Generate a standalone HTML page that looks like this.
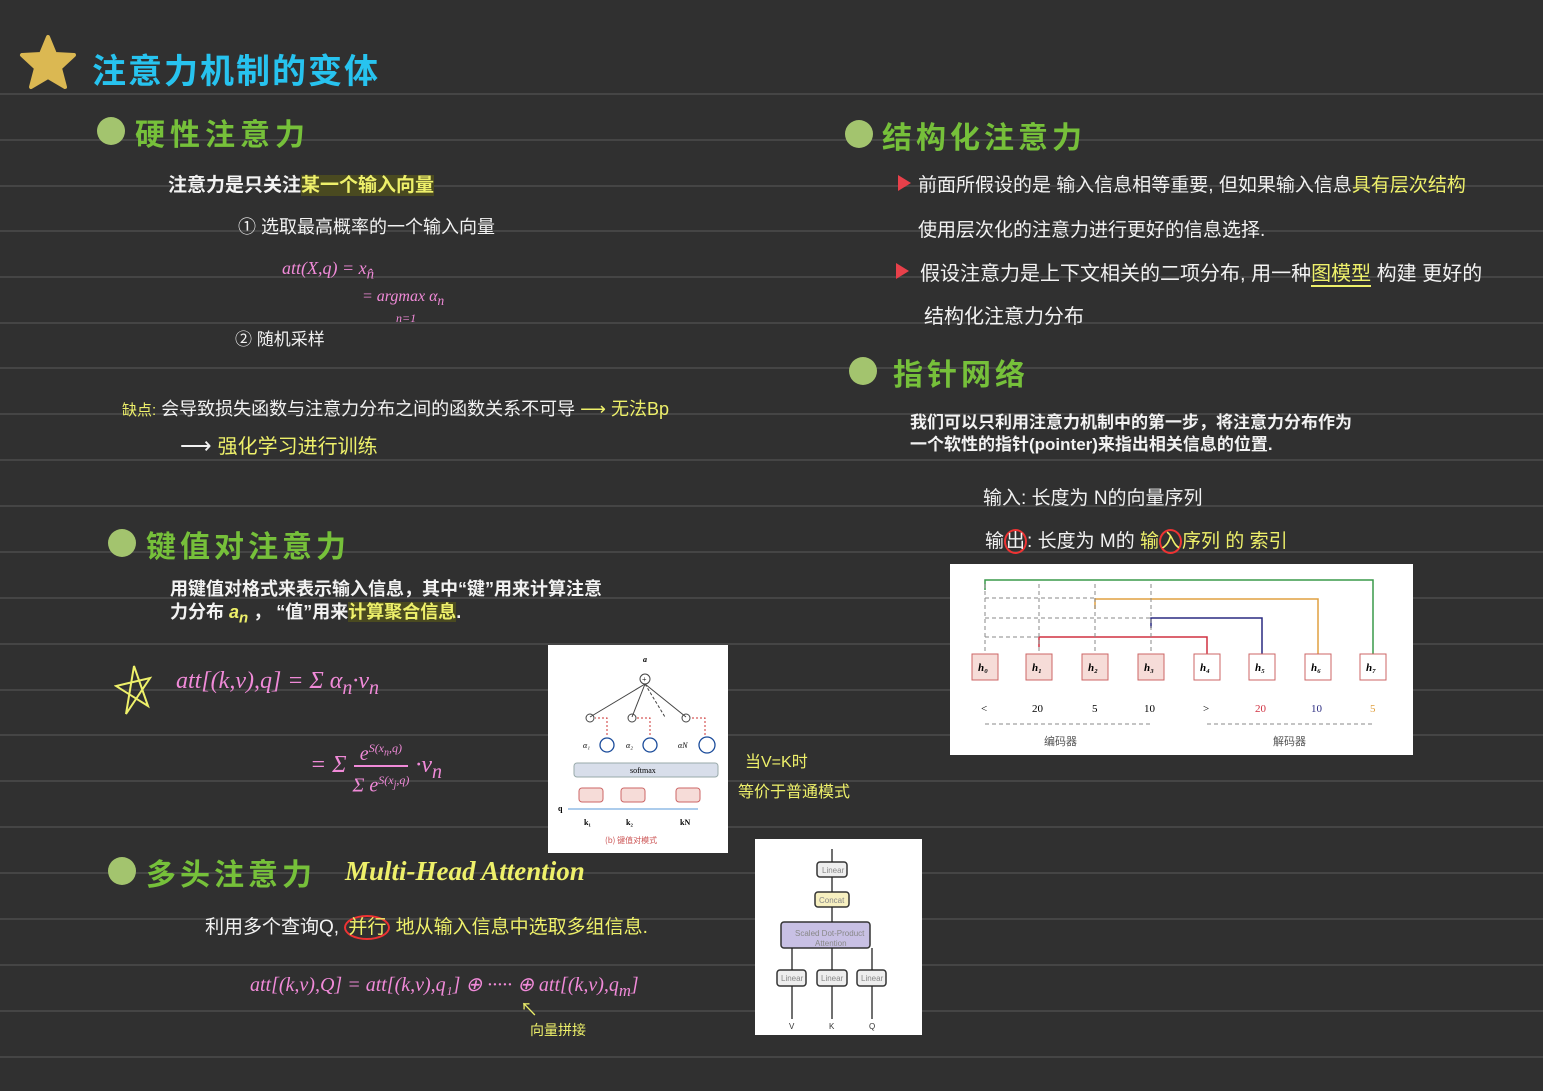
<!DOCTYPE html>
<html><head><meta charset="utf-8"><style>
body{margin:0;width:1543px;height:1091px;overflow:hidden;background:#303030;position:relative;font-family:"Liberation Sans","Noto Sans CJK SC",sans-serif;}
.l{position:absolute;left:0;width:1543px;height:2px;background:#454545;}
.t{position:absolute;white-space:nowrap;}
.h{color:#76c03a;font-weight:bold;font-size:30px;}
.dot{position:absolute;width:28px;height:28px;border-radius:50%;background:#a3c46e;}
.w{color:#f2f2f2;font-size:19px;}
.y{color:#eef06a;}
.p{color:#f08ad8;font-family:"Liberation Serif",serif;font-style:italic;}
.img{position:absolute;background:#fff;}
.tri{position:absolute;width:0;height:0;border-top:8px solid transparent;border-bottom:8px solid transparent;border-left:13px solid #e8404a;}
</style></head><body>
<div class="l" style="top:93px"></div><div class="l" style="top:139px"></div><div class="l" style="top:185px"></div><div class="l" style="top:230px"></div><div class="l" style="top:276px"></div><div class="l" style="top:322px"></div><div class="l" style="top:367px"></div><div class="l" style="top:413px"></div><div class="l" style="top:459px"></div><div class="l" style="top:505px"></div><div class="l" style="top:551px"></div><div class="l" style="top:597px"></div><div class="l" style="top:643px"></div><div class="l" style="top:689px"></div><div class="l" style="top:734px"></div><div class="l" style="top:780px"></div><div class="l" style="top:826px"></div><div class="l" style="top:872px"></div><div class="l" style="top:918px"></div><div class="l" style="top:964px"></div><div class="l" style="top:1010px"></div><div class="l" style="top:1056px"></div>

<svg style="position:absolute;left:18px;top:34px" width="60" height="56" viewBox="0 0 60 56"><path d="M30 3 L37 20 L56 21 L42 34 L47 53 L30 43 L13 53 L18 34 L4 21 L23 20Z" fill="#dbb852" stroke="#dbb852" stroke-width="4" stroke-linejoin="round"/></svg>
<div class="t" style="left:92px;top:44px;color:#27c3ef;font-size:34px;font-weight:bold;letter-spacing:2px">注意力机制的变体</div>

<div class="dot" style="left:97px;top:117px"></div>
<div class="t h" style="left:135px;top:110px;letter-spacing:5px">硬性注意力</div>
<div class="t w" style="left:168px;top:170px;font-weight:bold">注意力是只关注<span class="y" style="background:#4a4a20">某一个输入向量</span></div>
<div class="t w" style="left:238px;top:213px;font-size:18px">① 选取最高概率的一个输入向量</div>
<div class="t p" style="left:282px;top:258px;font-size:18px">att(X,q) = x<sub>n̂</sub></div>
<div class="t p" style="left:362px;top:288px;font-size:16px">= argmax α<sub>n</sub><br><span style="font-size:12px;margin-left:34px">n=1</span></div>
<div class="t w" style="left:235px;top:325px;font-size:17px">② 随机采样</div>
<div class="t w" style="left:122px;top:395px;font-size:18px"><span class="y" style="font-size:15px">缺点:</span> 会导致损失函数与注意力分布之间的函数关系不可导 <span class="y">⟶ 无法Bp</span></div>
<div class="t w" style="left:180px;top:430px;font-size:22px">⟶ <span class="y" style="font-size:20px">强化学习进行训练</span></div>

<div class="dot" style="left:108px;top:529px"></div>
<div class="t h" style="left:146px;top:522px;letter-spacing:4px">键值对注意力</div>
<div class="t w" style="left:170px;top:578px;font-weight:bold;font-size:18px;line-height:23px">用键值对格式来表示输入信息，其中“键”用来计算注意<br>力分布 <span class="y" style="font-style:italic">a<sub>n</sub></span> ， “值”用来<span class="y" style="background:#4a4a20">计算聚合信息</span>.</div>
<svg style="position:absolute;left:114px;top:664px" width="40" height="52"><path d="M12 50 L20 2 L34 42 L2 22 L36 14 Z" fill="none" stroke="#eef06a" stroke-width="2"/></svg>
<div class="t p" style="left:176px;top:668px;font-size:24px">att[(k,v),q] = Σ α<sub>n</sub>·v<sub>n</sub></div>
<div class="t p" style="left:310px;top:735px;font-size:24px">= Σ <span style="display:inline-block;vertical-align:middle;text-align:center;font-size:20px;line-height:26px"><span style="border-bottom:2px solid #f08ad8;padding:0 6px">e<sup style="font-size:12px">S(x<sub>n</sub>,q)</sup></span><br>Σ e<sup style="font-size:12px">S(x<sub>j</sub>,q)</sup></span> ·v<sub>n</sub></div>

<div class="img" style="left:548px;top:645px;width:180px;height:208px">
<svg width="180" height="208" font-family="Liberation Serif" font-size="8">
<text x="95" y="17" font-weight="bold" font-style="italic">a</text>
<circle cx="97" cy="34" r="5" fill="none" stroke="#444"/><text x="94" y="37">+</text>
<line x1="97" y1="39" x2="42" y2="72" stroke="#444"/><line x1="97" y1="39" x2="84" y2="72" stroke="#444"/><line x1="97" y1="39" x2="138" y2="72" stroke="#444"/><line x1="97" y1="39" x2="117" y2="72" stroke="#444" stroke-dasharray="3 2"/>
<g fill="none" stroke="#444"><circle cx="42" cy="73" r="4"/><circle cx="84" cy="73" r="4"/><circle cx="138" cy="73" r="4"/></g>
<g fill="none" stroke="#c33" stroke-dasharray="2 2"><path d="M59 90V73H47M102 90V73H89M157 90V73H143"/></g>
<text x="35" y="103" font-style="italic">α₁</text><text x="78" y="103" font-style="italic">α₂</text><text x="130" y="103" font-style="italic">αN</text>
<g fill="none" stroke="#1a4b9a" stroke-width="1.3"><circle cx="59" cy="100" r="7"/><circle cx="102" cy="100" r="7"/><circle cx="159" cy="100" r="8"/></g>
<rect x="26" y="118" width="144" height="14" rx="3" fill="#d8deea" stroke="#9aa"/><text x="82" y="128">softmax</text>
<g fill="#f6dcd8" stroke="#c66"><rect x="31" y="143" width="24" height="14" rx="3"/><rect x="73" y="143" width="24" height="14" rx="3"/><rect x="128" y="143" width="24" height="14" rx="3"/></g>
<line x1="20" y1="164" x2="150" y2="164" stroke="#5a9ad8"/><text x="10" y="166" font-weight="bold">q</text>
<text x="36" y="180" font-weight="bold">k₁</text><text x="78" y="180" font-weight="bold">k₂</text><text x="132" y="180" font-weight="bold">kN</text>
<text x="57" y="198" fill="#c55" font-family="Noto Sans CJK SC">(b) 键值对模式</text>
</svg></div>
<div class="t y" style="left:745px;top:748px;font-size:16px">当V=K时</div>
<div class="t y" style="left:738px;top:778px;font-size:16px">等价于普通模式</div>

<div class="dot" style="left:108px;top:857px"></div>
<div class="t h" style="left:146px;top:850px;letter-spacing:4px">多头注意力</div>
<div class="t" style="left:345px;top:856px;color:#eef06a;font-family:'Liberation Serif',serif;font-style:italic;font-weight:bold;font-size:27px;letter-spacing:0">Multi-Head Attention</div>
<div class="t w" style="left:205px;top:912px;font-size:19px">利用多个查询Q, <span style="border:2px solid #e33;border-radius:50%;padding:0 2px" class="y">并行</span> <span class="y">地从输入信息中选取多组信息.</span></div>
<div class="t p" style="left:250px;top:972px;font-size:20px">att[(k,v),Q] = att[(k,v),q₁] ⊕ ····· ⊕ att[(k,v),q<sub>m</sub>]</div>
<div class="t y" style="left:530px;top:1020px;font-size:14px">向量拼接</div>
<div class="t y" style="left:520px;top:996px;font-size:18px">↖</div>

<div class="img" style="left:755px;top:839px;width:167px;height:196px">
<svg width="167" height="196" font-family="Liberation Sans" font-size="8" fill="#888">
<rect x="62" y="23" width="30" height="15" rx="3" fill="#eee" stroke="#333" stroke-width="1.5"/><text x="67" y="34">Linear</text>
<rect x="60" y="53" width="34" height="15" rx="3" fill="#f7f0c0" stroke="#333" stroke-width="1.5"/><text x="64" y="64">Concat</text>
<rect x="26" y="83" width="89" height="26" rx="3" fill="#c8c0e4" stroke="#333" stroke-width="1.5"/><text x="40" y="97">Scaled Dot-Product</text><text x="60" y="107">Attention</text>
<g stroke="#333" stroke-width="1.5" fill="#eee"><rect x="22" y="131" width="29" height="16" rx="3"/><rect x="62" y="131" width="30" height="16" rx="3"/><rect x="102" y="131" width="29" height="16" rx="3"/></g>
<text x="26" y="142">Linear</text><text x="66" y="142">Linear</text><text x="106" y="142">Linear</text>
<g stroke="#222" stroke-width="1.3"><line x1="77" y1="10" x2="77" y2="23"/><line x1="77" y1="38" x2="77" y2="53"/><line x1="77" y1="68" x2="77" y2="83"/><line x1="37" y1="109" x2="37" y2="131"/><line x1="77" y1="109" x2="77" y2="131"/><line x1="117" y1="109" x2="117" y2="131"/><line x1="37" y1="147" x2="37" y2="180"/><line x1="77" y1="147" x2="77" y2="180"/><line x1="117" y1="147" x2="117" y2="180"/></g>
<text x="34" y="190" fill="#333">V</text><text x="74" y="190" fill="#333">K</text><text x="114" y="190" fill="#333">Q</text>
</svg></div>

<div class="dot" style="left:845px;top:120px"></div>
<div class="t h" style="left:882px;top:113px;letter-spacing:4px">结构化注意力</div>
<div class="tri" style="left:898px;top:175px"></div>
<div class="t w" style="left:918px;top:170px;font-size:19px">前面所假设的是 输入信息相等重要, 但如果输入信息<span class="y">具有层次结构</span></div>
<div class="t w" style="left:918px;top:215px;font-size:19px">使用层次化的注意力进行更好的信息选择.</div>
<div class="tri" style="left:896px;top:263px"></div>
<div class="t w" style="left:920px;top:257px;font-size:20px">假设注意力是上下文相关的二项分布, 用一种<span class="y" style="border-bottom:2px solid #eef06a">图模型</span> 构建 更好的</div>
<div class="t w" style="left:924px;top:300px;font-size:20px">结构化注意力分布</div>

<div class="dot" style="left:849px;top:357px"></div>
<div class="t h" style="left:893px;top:350px;letter-spacing:4px">指针网络</div>
<div class="t w" style="left:910px;top:412px;font-weight:bold;font-size:17px;line-height:22px">我们可以只利用注意力机制中的第一步，将注意力分布作为<br>一个软性的指针(pointer)来指出相关信息的位置.</div>
<div class="t w" style="left:983px;top:483px;font-size:19px">输入: 长度为 N的向量序列</div>
<div class="t w" style="left:985px;top:526px;font-size:19px">输<span style="border:2px solid #e33;border-radius:50%">出</span>: 长度为 M的 <span class="y">输<span style="border:2px solid #e33;border-radius:50%">入</span>序列 的 索引</span></div>

<div class="img" style="left:950px;top:564px;width:463px;height:191px">
<svg width="463" height="191" font-family="Liberation Serif" font-size="11">
<g fill="none" stroke-width="1.5"><path d="M423 102V16H35V26" stroke="#3a9a4a"/><path d="M368 102V35H145V45" stroke="#e0a040"/><path d="M312 102V54H201V64" stroke="#2a2a80"/><path d="M257 102V73H89V83" stroke="#d03040"/></g>
<g fill="none" stroke="#888" stroke-dasharray="4 3"><path d="M35 34H145M35 54H201M35 73H89M35 20V90M89 20V90M145 20V90M201 20V90M35 160H201M257 160H423"/></g>
<g stroke="#c66" fill="#f6dcd8"><rect x="22" y="90" width="26" height="26"/><rect x="76" y="90" width="26" height="26"/><rect x="132" y="90" width="26" height="26"/><rect x="188" y="90" width="26" height="26"/></g>
<g stroke="#c66" fill="#fff"><rect x="244" y="90" width="26" height="26"/><rect x="299" y="90" width="26" height="26"/><rect x="355" y="90" width="26" height="26"/><rect x="410" y="90" width="26" height="26"/></g>
<g font-weight="bold" font-style="italic"><text x="28" y="107">h₀</text><text x="82" y="107">h₁</text><text x="138" y="107">h₂</text><text x="194" y="107">h₃</text><text x="250" y="107">h₄</text><text x="305" y="107">h₅</text><text x="361" y="107">h₆</text><text x="416" y="107">h₇</text></g>
<text x="31" y="148">&lt;</text><text x="82" y="148">20</text><text x="142" y="148">5</text><text x="194" y="148">10</text><text x="253" y="148">&gt;</text><text x="305" y="148" fill="#d03040">20</text><text x="361" y="148" fill="#2a2a80">10</text><text x="420" y="148" fill="#e0a040">5</text>
<text x="94" y="181" fill="#555" font-family="Noto Sans CJK SC">编码器</text><text x="323" y="181" fill="#555" font-family="Noto Sans CJK SC">解码器</text>
</svg></div>
</body></html>
